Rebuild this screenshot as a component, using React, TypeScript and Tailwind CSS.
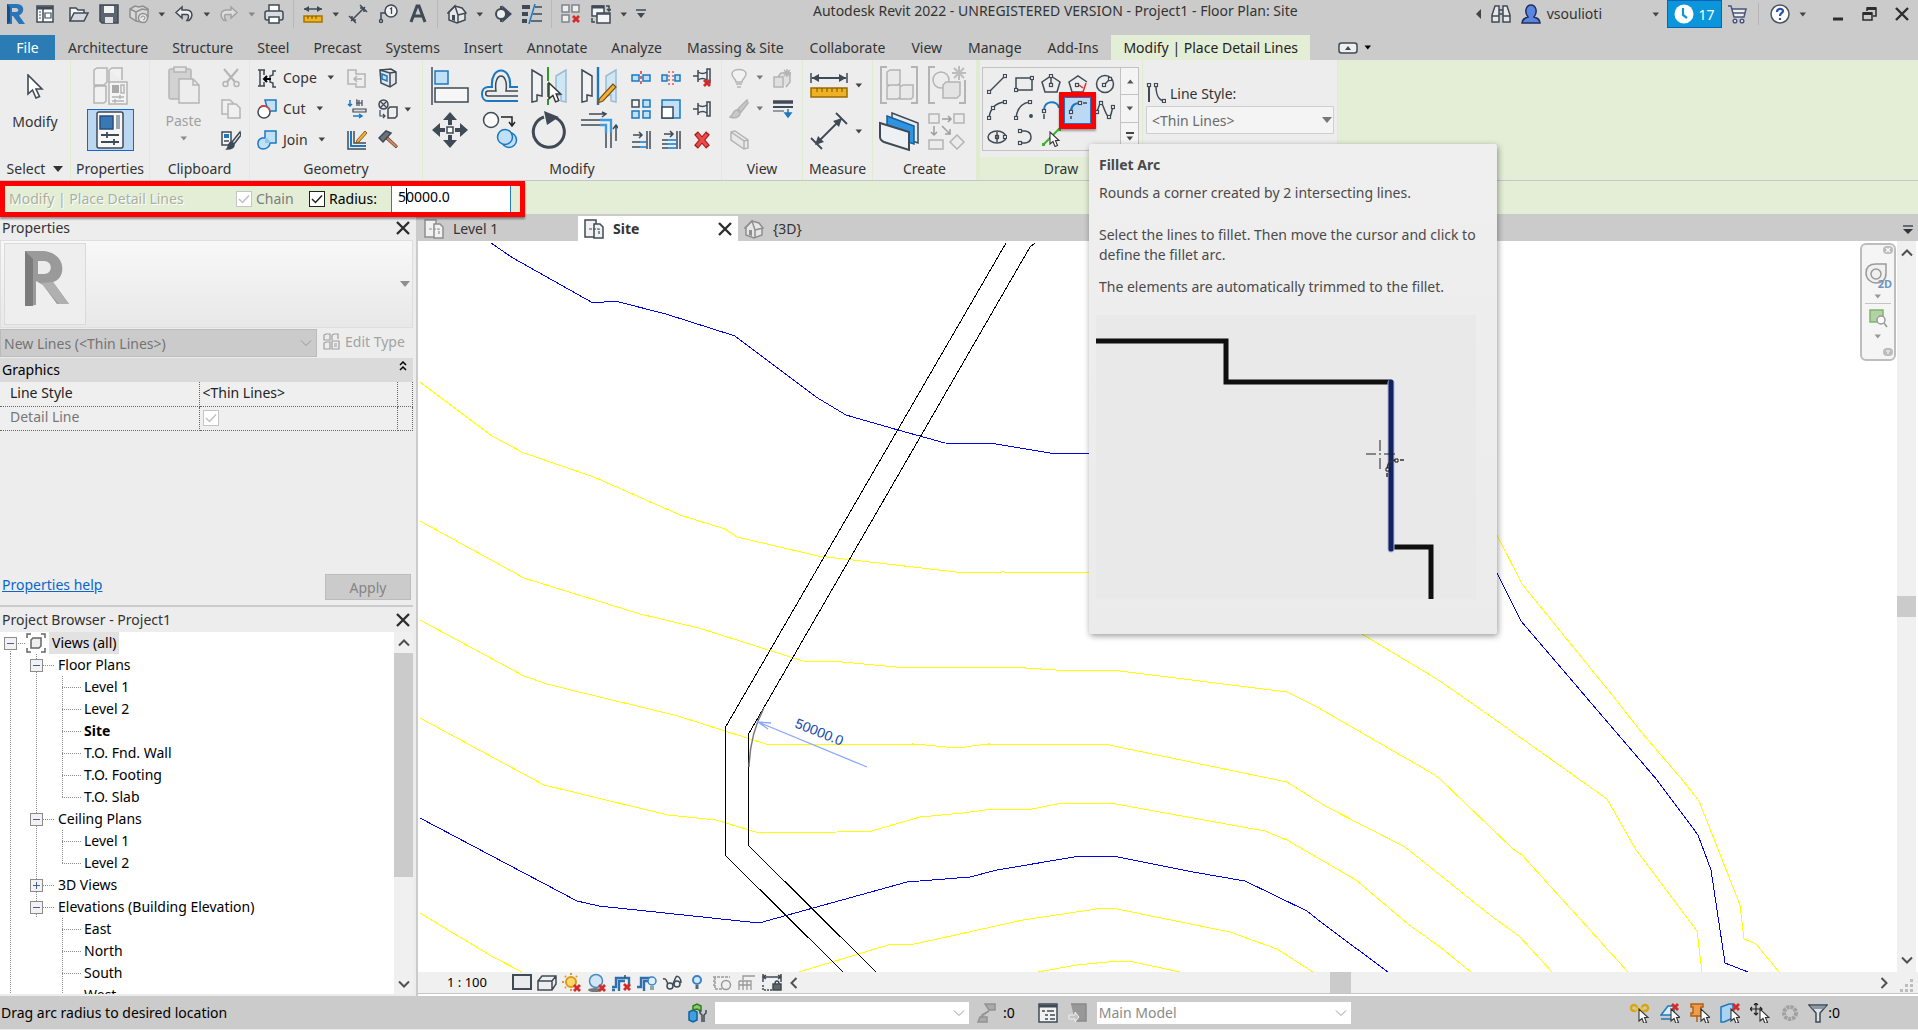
import { useState, type ReactNode } from "react"

const DARK = "#3f4a56"
const BLUE = "#1c78c0"
const PALE = "#bfe0f6"
const GREY = "#b4b4b4"

type DrawingProps = { w?: number; h?: number; children: ReactNode; className?: string }

function Drawing({ w = 20, h = 20, children, className = "" }: DrawingProps) {
  return (
    <svg width={w} height={h} viewBox={`0 0 ${w} ${h}`} fill="none" stroke={DARK} strokeWidth="1.5" className={`shrink-0 ${className}`} aria-hidden="true">
      {children}
    </svg>
  )
}

function Caret({ className = "text-[#444]" }: { className?: string }) {
  return (
    <svg width="8" height="5" viewBox="0 0 8 5" className={`shrink-0 ${className}`} aria-hidden="true">
      <path d="M0.5 0.5h6.5L3.75 4.5z" fill="currentColor" />
    </svg>
  )
}

function Chevron({ d, className = "text-[#505050]" }: { d: string; className?: string }) {
  return (
    <svg width="12" height="12" viewBox="0 0 12 12" fill="none" stroke="currentColor" strokeWidth="2" className={`shrink-0 ${className}`} aria-hidden="true">
      <path d={d} />
    </svg>
  )
}

const UP = "M1 8.5l5-5 5 5"
const DOWN = "M1 3.5l5 5 5-5"
const LEFT = "M8.5 1l-5 5 5 5"
const RIGHT = "M3.5 1l5 5-5 5"

function CloseMark({ size = 14 }: { size?: number }) {
  return (
    <svg width={size} height={size} viewBox="0 0 14 14" stroke="#2d2d2d" strokeWidth="2.4" aria-hidden="true">
      <path d="M1 1l12 12M13 1L1 13" />
    </svg>
  )
}

/* ---------- shared drawings ---------- */

const house = (c: string) => (
  <>
    <path d="M1 9l7-7 7 2 4 5-1 1v6l-8 3-8-3V9z" fill="#e6e6e6" stroke={c} />
    <path d="M1 9l7-7 3 9v8M11 11l8-2" stroke={c} />
    <path d="M5 11h3v6l-3-1z" fill={c} stroke="none" />
  </>
)

const cursor = (
  <path d="M0 0v12l3-2.5 2 5 2.5-1-2-5H9z" fill="#fff" stroke="#333" strokeWidth="1.1" />
)

const redCross = <path d="M0 0l6 6M6 0L0 6" stroke="#d42a2a" strokeWidth="2.8" />

/* ---------- title bar ---------- */

type QuickItem = { name: string; art?: ReactNode; kind?: "caret" | "sep"; off?: boolean }

const quickItems: QuickItem[] = [
  {
    name: "Application menu",
    art: (
      <>
        <path d="M2 0h10c8 0 8 9 2 11.500l6 8.500h-6L8 12H7v8H2z" fill="#2a74b8" stroke="none" />
        <path d="M7 4h4c3 0 3 4 0 4H7z" fill="#cbcbcb" stroke="none" />
        <path d="M2 0l3 3v15l-3 2z" fill="#174f86" stroke="none" />
      </>
    ),
  },
  {
    name: "Home",
    art: (
      <>
        <rect x="2" y="2" width="16" height="16" fill="#fff" />
        <path d="M2 4h16" strokeWidth="3" />
        <path d="M8 5v13" />
        <path d="M4 8h2M4 11h2M4 14h2M10 9h6v5h-6z" strokeWidth="1.2" />
      </>
    ),
  },
  {
    name: "Open",
    art: (
      <>
        <path d="M1 17V4h6l2 2h6v3" fill="#f4f4f4" />
        <path d="M1 17l4-8h14l-4 8z" fill="#d5d9dd" />
      </>
    ),
  },
  {
    name: "Save",
    art: (
      <>
        <path d="M1 1h18v18H3l-2-2z" fill="#5a6570" />
        <path d="M5 2h10v7H5z" fill="#f2f2f2" stroke="none" />
        <path d="M6 13h8v6H6z" fill="#dfe3e6" stroke="none" />
      </>
    ),
  },
  {
    name: "Synchronize",
    off: true,
    art: (
      <>
        <path d="M1 5l5-3 4 1 4-1 5 3v8l-6 5-6-1-6-4z" fill="#d8d8d8" stroke="#8f8f8f" />
        <path d="M1 5l6 3 6-3 6 1M7 8v9" stroke="#8f8f8f" />
        <circle cx="14" cy="14" r="4.500" fill="#e6e6e6" stroke="#8f8f8f" />
        <path d="M12 14a2 2 0 1 1 2 2" stroke="#8f8f8f" strokeWidth="1" />
      </>
    ),
  },
  { name: "Synchronize options", kind: "caret" },
  { name: "Undo", art: <path d="M8 3L2 8.500 8 14v-3.500h5c2 0 2 3 0 6h2c5-5 3-10-2-10.500H8z" fill="#eee" /> },
  { name: "Undo history", kind: "caret" },
  { name: "Redo", off: true, art: <path d="M12 3l6 5.500-6 5.500v-3.500H7c-2 0-2 3 0 6H5c-5-5-3-10 2-10.500h5z" fill="#ddd" stroke="#a2a2a2" /> },
  { name: "Redo history", kind: "caret", off: true },
  {
    name: "Print",
    art: (
      <>
        <path d="M5 7V1h10v6" fill="#fff" />
        <rect x="1" y="7" width="18" height="9" rx="2" fill="#d8dce0" />
        <path d="M5 13h10v6H5z" fill="#fff" />
      </>
    ),
  },
  { name: "s1", kind: "sep" },
  {
    name: "Measure",
    art: (
      <>
        <path d="M1 5h18" />
        <path d="M1 5l5-3v6zM19 5l-5-3v6z" fill={DARK} stroke="none" />
        <rect x="1" y="12" width="18" height="6" fill="#f0b323" stroke="#a87400" />
        <path d="M5 12v3M9 12v3M13 12v3" stroke="#7a5500" strokeWidth="1" />
      </>
    ),
  },
  { name: "Measure options", kind: "caret" },
  { name: "Aligned Dimension", art: <path d="M3 17L17 3M1 12l7 7M12 1l7 7M4 12v4h4M16 8V4h-4" /> },
  {
    name: "Tag by Category",
    art: (
      <>
        <circle cx="13" cy="7" r="6" fill="#f3f3f3" />
        <path d="M12 5l1.500-1v6" strokeWidth="1.3" />
        <path d="M7 9H3v7" />
        <circle cx="3" cy="17" r="1.500" fill="#fff" />
      </>
    ),
  },
  { name: "Text", art: <path d="M3 18L9 2h2l6 16M6 12h8" strokeWidth="3" /> },
  { name: "s2", kind: "sep" },
  { name: "Default 3D View", art: house(DARK) },
  { name: "3D View options", kind: "caret" },
  {
    name: "Section",
    art: (
      <>
        <path d="M9 2v16" strokeWidth="2" />
        <path d="M11 3l8 7-8 7z" fill={DARK} />
        <circle cx="9" cy="10" r="5" fill="#eee" strokeWidth="2" />
      </>
    ),
  },
  {
    name: "Thin Lines",
    art: (
      <>
        <path d="M0 3h8M0 10h6M0 17h5" strokeWidth="4" />
        <path d="M13 0L7 20" stroke={BLUE} />
        <path d="M13 3h7M11 10h9M9 17h11" strokeWidth="1.3" />
      </>
    ),
  },
  { name: "s3", kind: "sep" },
  {
    name: "Close Inactive Views",
    art: (
      <>
        <path d="M1 1h7v7H1zM11 1h7v7h-7zM1 11h7v7H1z" fill="#eee" stroke="#7e858c" />
        <g transform="translate(12 12)">{redCross}</g>
      </>
    ),
  },
  {
    name: "Switch Windows",
    art: (
      <>
        <rect x="1" y="2" width="12" height="10" fill="#f4f4f4" />
        <path d="M1 3h12" strokeWidth="3" />
        <rect x="6" y="9" width="13" height="10" fill="#f4f4f4" />
        <path d="M6 10h13M15 2h3v5M16 5l2 2 2-2M1 14v4h3" />
      </>
    ),
  },
  { name: "Switch Windows list", kind: "caret" },
]

function QuickAccess() {
  return (
    <div className="flex h-[28px] items-center">
      {quickItems.map((item) => {
        if (item.kind === "sep") {
          return (
            <span key={item.name} className="flex w-[9px] justify-center">
              <span className="h-7 w-px bg-[#b9b9b9]" />
            </span>
          )
        }
        if (item.kind === "caret") {
          return (
            <button key={item.name} aria-label={item.name} className="flex w-[15px] justify-center">
              <Caret className={item.off ? "text-[#888]" : "text-[#444]"} />
            </button>
          )
        }
        return (
          <button key={item.name} aria-label={item.name} className={`flex w-[30px] justify-center ${item.name === "Home" ? "mr-1" : ""}`}>
            <Drawing>{item.art}</Drawing>
          </button>
        )
      })}
      <button aria-label="Customize Quick Access Toolbar" className="flex w-5 justify-center">
        <Drawing w={12} h={12}>
          <path d="M1 2h10" />
          <path d="M2 5h8l-4 5z" fill={DARK} stroke="none" />
        </Drawing>
      </button>
    </div>
  )
}

function TitleBar() {
  return (
    <header className="flex h-[35px] shrink-0 items-start justify-between bg-[#cbcbcb]">
      <QuickAccess />
      <h1 className="flex-1 pl-[162px] text-[14px] leading-[22px] whitespace-nowrap">
        Autodesk Revit 2022 - UNREGISTERED VERSION - Project1 - Floor Plan: Site
      </h1>
      <div className="flex h-[28px] items-center text-[14px]">
        <button aria-label="Collapse search" className="mr-2">
          <Drawing w={8} h={10}><path d="M6 0v10L1 5z" fill="#444" stroke="none" /></Drawing>
        </button>
        <button aria-label="Search" className="mr-2.5">
          <Drawing>
            <path d="M1 18v-7l3-9h4v16zM19 18v-7l-3-9h-4v16z" fill="#e8e8e8" />
            <path d="M8 6h4M8 10h4M1 12h7M12 12h7" />
          </Drawing>
        </button>
        <button className="flex items-center gap-1.5 leading-[28px]">
          <Drawing>
            <path d="M1 19c0-4 3-5 6-6-4-5-2-12 3-12s7 7 3 12c3 1 6 2 6 6z" fill="#5b86e0" stroke="#1f2f5c" />
          </Drawing>
          vsoulioti
        </button>
        <button aria-label="Account menu" className="mr-[7px] ml-[50px]"><Caret /></button>
        <button className="flex h-[28px] w-[55px] items-center justify-center gap-1 border border-[#0a62b8] bg-[#0b96dc] text-white">
          <Drawing>
            <circle cx="10" cy="10" r="9.500" fill="#fff" stroke="none" />
            <path d="M9 4v7l4 3" stroke="#0b96dc" strokeWidth="2.200" />
          </Drawing>
          17
        </button>
        <button aria-label="App Store" className="ml-[5px]">
          <Drawing>
            <path d="M1 2h3l3 11h10l2-8H5M6 9h12" fill="#eee" stroke="#4a5578" />
            <circle cx="8" cy="17" r="1.800" fill="#fff" stroke="#4a5578" />
            <circle cx="15" cy="17" r="1.800" fill="#fff" stroke="#4a5578" />
          </Drawing>
        </button>
        <span className="mx-[11px] h-[22px] w-px bg-[#b5b5b5]" />
        <button aria-label="Help">
          <Drawing>
            <circle cx="10" cy="10" r="9" fill="#fff" stroke="#4a5560" />
            <path d="M7 8c0-4 6-4 6-1 0 2-3 2-3 5M10 14v2" stroke="#2951a8" strokeWidth="2.200" />
          </Drawing>
        </button>
        <button aria-label="Help menu" className="ml-[9px]"><Caret /></button>
        <button aria-label="Minimize" className="ml-[26px]">
          <Drawing w={10} h={14}><path d="M0 12h10" stroke="#2d2d2d" strokeWidth="3" /></Drawing>
        </button>
        <button aria-label="Restore" className="ml-[19px]">
          <Drawing w={15} h={14}>
            <path d="M5 4V1h9v8h-3" stroke="#2d2d2d" />
            <path d="M5 1.500h9M1 6.500h9" stroke="#2d2d2d" strokeWidth="3" />
            <path d="M1 6h9v7H1z" stroke="#2d2d2d" />
          </Drawing>
        </button>
        <button aria-label="Close" className="mr-[9px] ml-[18px]"><CloseMark /></button>
      </div>
    </header>
  )
}

/* ---------- ribbon tabs ---------- */

const tabs = ["Architecture", "Structure", "Steel", "Precast", "Systems", "Insert", "Annotate", "Analyze"]
const moreTabs = ["Massing & Site", "Collaborate", "View", "Manage", "Add-Ins"]

function RibbonTabs() {
  return (
    <nav className="flex h-[25px] shrink-0 items-stretch bg-[#cbcbcb] text-[14px] leading-[25px] whitespace-nowrap">
      <button className="mr-px w-[55px] bg-[#2b7bb4] text-white">File</button>
      {tabs.map((tab) => (
        <button key={tab} className="px-3">{tab}</button>
      ))}
      {moreTabs.map((tab) => (
        <button key={tab} className="px-[13px]">{tab}</button>
      ))}
      <button className="bg-[#e4eed6] px-3 text-[#222]">Modify | Place Detail Lines</button>
      <button aria-label="Minimize ribbon" className="ml-7 flex items-center gap-1.5">
        <Drawing w={20} h={12}>
          <rect x="1" y="1" width="18" height="10" rx="2.500" fill="#eee" />
          <path d="M7 8h6l-3-4z" fill={DARK} stroke="none" />
        </Drawing>
        <Caret className="text-black" />
      </button>
    </nav>
  )
}

/* ---------- ribbon panels ---------- */

function Panel({ title, className = "", labelClass = "", children }: { title: ReactNode; className?: string; labelClass?: string; children: ReactNode }) {
  return (
    <section className={`flex shrink-0 flex-col border-r border-[#e0ecd0] bg-[#ededed] ${className}`}>
      <div className="flex h-[97px] pt-[2px]">{children}</div>
      <div className={`flex h-[23px] items-center justify-center text-[14px] leading-[23px] ${labelClass}`}>{title}</div>
    </section>
  )
}

function Tool({ name, w = 20, h = 20, children, className = "" }: { name: string; w?: number; h?: number; children: ReactNode; className?: string }) {
  return (
    <button aria-label={name} title={name} className={`flex items-center justify-center ${className}`}>
      <Drawing w={w} h={h}>{children}</Drawing>
    </button>
  )
}

function SelectPanel() {
  return (
    <Panel
      className="w-[71px]"
      title={
        <span className="flex items-center gap-2">
          Select
          <Drawing w={10} h={6}><path d="M0 0h10L5 6z" fill="#333" stroke="none" /></Drawing>
        </span>
      }
    >
      <button className="flex w-full flex-col items-center pt-3">
        <Drawing w={18} h={26}>
          <path d="M2 1v19l4.500-4 3.500 8 3.500-1.500L10 15h6z" fill="#fff" strokeWidth="1.600" />
        </Drawing>
        <span className="mt-2.5 text-[14px] leading-[24px]">Modify</span>
      </button>
    </Panel>
  )
}

function PropertiesPanel() {
  return (
    <Panel className="w-[79px]" title="Properties">
      <div className="flex w-full flex-col items-center pt-[5px]">
        <Tool name="Type Properties" w={38} h={38} className="mb-1">
          <path d="M3 3l3-2h10v14l-3 3H3zM18 3l3-2h10v12M18 3v12M3 20l3-1h9v15l-2 2H3z" fill="#f1f1f1" stroke={GREY} />
          <path d="M18 15h18v22H18z" fill="#f4f4f4" stroke={GREY} />
          <path d="M21 18h7v8h-7z" fill="#a9a9a9" stroke="none" />
          <path d="M30 18h3v8h-3zM21 30h12M21 34h12M29 28v4M24 32v4" stroke={GREY} />
        </Tool>
        <button aria-label="Properties" className="flex h-[42px] w-[47px] items-center justify-center border border-[#1368ce] bg-[#bcd7f2]">
          <Drawing w={28} h={38}>
            <rect x="1" y="1" width="26" height="36" rx="2" fill="#f7f7f7" />
            <path d="M4 5h13v13H4z" fill="#3a78b5" stroke="#23527f" />
            <path d="M20 4h4v14h-4z" fill="#9fa6ad" stroke="none" />
            <path d="M5 24h18M5 31h18M11 21v6M18 28v6" strokeWidth="1.800" />
          </Drawing>
        </button>
      </div>
    </Panel>
  )
}

function ClipboardPanel() {
  return (
    <Panel className="w-[100px]" title="Clipboard">
      <button className="flex w-[67px] flex-col items-center pt-1 text-[#a0a0a0]">
        <Drawing w={34} h={38}>
          <rect x="2" y="3" width="22" height="30" rx="2" fill="#d2d2d2" stroke="#b5b5b5" />
          <path d="M7 1h12v5H7z" fill="#e6e6e6" stroke="#b5b5b5" />
          <path d="M12 13h14l6 6v18H12z" fill="#ededed" stroke="#b5b5b5" />
          <path d="M26 13v6h6" stroke="#b5b5b5" />
        </Drawing>
        <span className="mt-1.5 text-[14px] leading-[22px]">Paste</span>
        <Caret className="mt-1 text-[#8a8a8a]" />
      </button>
      <div className="grid w-7 grid-rows-3 pb-0.5">
        <Tool name="Cut to Clipboard">
          <path d="M3 1l11 13M17 1L6 14" stroke={GREY} strokeWidth="2" />
          <circle cx="4.500" cy="16" r="2.500" stroke={GREY} />
          <circle cx="15.500" cy="16" r="2.500" stroke={GREY} />
        </Tool>
        <Tool name="Copy to Clipboard">
          <path d="M1 1h8l3 3v11H1z" fill="#f0f0f0" stroke={GREY} />
          <path d="M7 5h8l4 4v10H7z" fill="#f0f0f0" stroke={GREY} />
        </Tool>
        <Tool name="Match Type Properties">
          <path d="M1 2h9v13H1z" fill="#f6f6f6" />
          <path d="M3 4h5v4H3z" fill={BLUE} stroke="none" />
          <path d="M3 11h5" />
          <path d="M19 2l-8 10 2 2 7-9z" fill="#efefef" />
          <path d="M10 12l3 3c0 3-4 4-7 4 2-2 1-6 4-7z" fill={DARK} />
        </Tool>
      </div>
    </Panel>
  )
}

function LabelTool({ label, children }: { label: string; children: ReactNode }) {
  return (
    <button className="flex items-center text-[14px]">
      <Drawing>{children}</Drawing>
      <span className="mr-2.5 ml-[6px]">{label}</span>
      <Caret />
    </button>
  )
}

function GeometryPanel() {
  return (
    <Panel className="w-[173px]" title="Geometry">
      <div className="grid w-[92px] grid-rows-3 pb-0.5 pl-[7px]">
        <LabelTool label="Cope">
          <path d="M1 2h7M1 18h7M3 2v16M7 2v5M7 18v-4M19 3h-3v4l-3 1v6l3 1v4h3" />
          <path d="M14 11H7M10 8l-3 3 3 3" stroke="#000" strokeWidth="2" />
        </LabelTool>
        <LabelTool label="Cut">
          <path d="M8 1h11v11h-8z" fill={PALE} stroke={BLUE} />
          <circle cx="7" cy="13" r="6" fill="#fff" />
          <path d="M3 8c4-3 9 0 10 4" stroke="#e04040" />
        </LabelTool>
        <LabelTool label="Join">
          <path d="M8 1h11v12h-6c0 4-4 6-7 6-6 0-7-9-1-11h3z" fill={PALE} stroke={BLUE} />
          <path d="M8 8c3 0 5 2 5 5H8z" fill="#8fc6ec" stroke="none" />
        </LabelTool>
      </div>
      <div className="grid w-[30px] grid-rows-3 pb-0.5">
        <Tool name="Wall Joins">
          <path d="M1 2h8v4h9v13h-9v-3H1z" fill="#eee" stroke={GREY} />
          <path d="M15 11H7M10 8l-3 3 3 3" stroke={GREY} />
        </Tool>
        <Tool name="Beam Joins">
          <path d="M3 1v6M1 5l2 2 2-2" stroke={BLUE} />
          <path d="M9 1h1v6M12 1v6M15 1v6M9 4h6M6 10h13v3H6z" fill="#ddd" strokeWidth="1.200" />
          <path d="M6 17h9M12 15l3 2-3 2" stroke={BLUE} />
        </Tool>
        <Tool name="Split Face">
          <path d="M1 1v18h18M7 1v12h12" />
          <path d="M4 1v15h15" stroke={BLUE} strokeWidth="2" />
          <path d="M18 1l-8 9-1 3 3-1 8-9z" fill="#f0b040" stroke="#8c5a12" strokeWidth="1" />
        </Tool>
      </div>
      <div className="grid w-[32px] grid-rows-3 pb-0.5">
        <Tool name="Paint">
          <path d="M2 2l11-1 5 3v11l-6 4-9-4z" fill="#e4e8ec" />
          <path d="M2 2l10 3v14M12 5l6-1" />
          <path d="M4 6l5 2v5l-5-2z" fill={PALE} stroke={BLUE} />
        </Tool>
        <Tool name="Demolish">
          <circle cx="5.500" cy="5.500" r="4.500" fill="#e2e2e2" />
          <path d="M2 2l7 7M9 2L2 9M2 11v6h5M5 15l2 2-2 2" strokeWidth="1.200" />
          <path d="M10 10l2-2h7v9l-2 2h-7z" fill="#eee" />
        </Tool>
        <Tool name="Hammer">
          <path d="M8 9l10 9 1.500-2L10 7z" fill="#c98a68" stroke="#7a4a30" strokeWidth="1" />
          <path d="M1 8l7-7 5 2-8 9z" fill="#6b747d" />
        </Tool>
      </div>
      <button aria-label="Demolish options" className="flex w-3 items-center"><Caret /></button>
    </Panel>
  )
}

function ModifyPanel() {
  return (
    <Panel className="w-[299px]" title="Modify">
      <div className="grid w-[201px] grid-cols-4 grid-rows-[48px_40px] pl-0.5">
        <Tool name="Align" w={38} h={38}>
          <path d="M1 0v38" />
          <path d="M4 4h13v13H4z" fill={PALE} stroke={BLUE} />
          <path d="M4 21h33v14H4z" fill="#f6f6f6" />
        </Tool>
        <Tool name="Offset" w={38} h={36}>
          <path d="M37 33H7c-8 0-8-14 0-14h4c-2-22 20-22 18 0h8" stroke={BLUE} strokeWidth="2" />
          <path d="M37 28H7c-3 0-3-5 0-5h8c-3-20 13-20 10 0h12" />
        </Tool>
        <Tool name="Mirror - Pick Axis" w={38} h={38}>
          <path d="M2 3l10 6v20l-5-1v6l-5 1z" fill="#f2f2f2" />
          <path d="M36 3l-10 6v20l5-1v6l5 1z" fill="#cfe6f5" stroke="#9bbdd4" />
          <path d="M18 0v38" stroke="#2c9a2c" strokeWidth="2" strokeDasharray="14 2" />
          <g transform="translate(19 16) scale(1.3)">{cursor}</g>
        </Tool>
        <Tool name="Mirror - Draw Axis" w={38} h={38}>
          <path d="M2 3l10 6v20l-5-1v6l-5 1z" fill="#f2f2f2" />
          <path d="M36 3l-10 6v20l5-1v6l5 1z" fill="#cfe6f5" stroke="#9bbdd4" />
          <path d="M18 0v38" stroke={BLUE} strokeWidth="2.400" />
          <path d="M33 17L20 31l-2 5 5-2 13-14z" fill="#f2b23c" stroke="#7c5313" strokeWidth="1.200" />
        </Tool>
        <Tool name="Move" w={38} h={38}>
          <path d="M19 1l7 8h-5v5h-4V9h-5zM19 37l7-8h-5v-5h-4v5h-5zM1 19l8-7v5h5v4H9v5zM37 19l-8-7v5h-5v4h5v5z" fill={DARK} stroke="none" />
          <path d="M16 16h6v6h-6z" fill="#fff" />
        </Tool>
        <Tool name="Copy" w={38} h={38}>
          <circle cx="10" cy="9" r="7.500" fill="#fafafa" />
          <path d="M20 6h11v8M28 11l3 4 3-4" stroke="#222" />
          <circle cx="28" cy="29" r="7.500" fill={PALE} stroke={BLUE} />
          <circle cx="24" cy="26" r="7.500" fill={PALE} stroke={BLUE} />
        </Tool>
        <Tool name="Rotate" w={38} h={38}>
          <path d="M14 6a15.500 15.500 0 1 0 12 1" strokeWidth="3" />
          <path d="M14 0l15 6-12 8z" fill={DARK} stroke="none" />
        </Tool>
        <Tool name="Trim/Extend to Corner" w={38} h={38}>
          <path d="M1 9h19M1 14h19M26 22v15M31 22v15M9 3h16M22 1l4 2-4 3M36 30V15M33 18l3-4 3 4" />
          <path d="M20 9h11v13M20 14h6v8" stroke="#3f9be0" strokeWidth="2.400" />
        </Tool>
      </div>
      <div className="grid w-[93px] grid-cols-3 grid-rows-3 pb-0.5 pl-[2px]">
        <Tool name="Split Element">
          <path d="M1 7h7v6H1zM12 7h7v6h-7z" fill={PALE} stroke={BLUE} />
          <path d="M10 3v14" stroke="#d33" strokeDasharray="3 2" />
        </Tool>
        <Tool name="Split with Gap">
          <path d="M1 7h5v6H1zM14 7h5v6h-5z" fill={PALE} stroke={BLUE} />
          <path d="M8 3v14M12 3v14" stroke="#d33" strokeWidth="1.200" strokeDasharray="2 2" />
        </Tool>
        <Tool name="Unpin">
          <path d="M1 8h5M6 2v12M6 4c3 2 6 2 9 0M6 12c3-2 6-2 9 0M15 1v14h3V1z" fill="#eee" />
          <g transform="translate(12 12)">{redCross}</g>
        </Tool>
        <Tool name="Array">
          <path d="M1 1h7v7H1z" fill="#f4f4f4" />
          <path d="M12 1h7v7h-7zM1 12h7v7H1zM12 12h7v7h-7z" fill={PALE} stroke={BLUE} />
        </Tool>
        <Tool name="Scale">
          <path d="M1 1h18v18H1z" fill={PALE} stroke={BLUE} />
          <path d="M1 8h11v11H1z" fill="#fff" />
        </Tool>
        <Tool name="Pin">
          <path d="M1 10h5M6 4v12M6 6c3 2 6 2 9 0M6 14c3-2 6-2 9 0M15 3v14h3V3z" fill="#eee" />
        </Tool>
        <Tool name="Trim/Extend Single">
          <path d="M16 1v18M19 1v18M2 5h9M8 2l3 3-3 3M1 12h8M1 17h8" />
          <path d="M9 12h6M9 17h6" stroke="#3f9be0" strokeWidth="2" />
        </Tool>
        <Tool name="Trim/Extend Multiple">
          <path d="M16 1v18M19 1v18M3 4h9M9 1l3 3-3 3M1 10h6M1 14h6M1 18h6" />
          <path d="M7 10h8M7 14h8M7 18h8" stroke="#3f9be0" strokeWidth="2" />
        </Tool>
        <Tool name="Delete">
          <path d="M4 3l12 14M16 3L4 17" stroke="#a81c1c" strokeWidth="5" />
          <path d="M5 4l10 12M15 4L5 16" stroke="#ee4b48" strokeWidth="3" />
        </Tool>
      </div>
    </Panel>
  )
}

function ViewPanel() {
  return (
    <Panel className="w-[81px]" title="View">
      <div className="grid w-full grid-cols-[34px_10px_34px] grid-rows-3 pb-0.5">
        <Tool name="Hide in View">
          <path d="M7 14c0-3-4-4-4-8C3 0 17 0 17 6c0 4-4 5-4 8zM7 16h6M8 19h4" fill="#f2f2f2" stroke={GREY} />
        </Tool>
        <button aria-label="Hide options" className="flex items-center"><Caret className="text-[#777]" /></button>
        <Tool name="Displace Elements">
          <path d="M1 9h9v10H1zM5 9l3-4h9v9l-4 5" fill="#e0e0e0" stroke={GREY} />
          <path d="M14 1v8M10 5h8M11 2l6 6M17 2l-6 6" stroke={GREY} />
        </Tool>
        <Tool name="Override Graphics">
          <path d="M18 1l-9 9 3 3 7-9zM8 11c-4 0-4 6-7 7 5 2 10 0 10-4z" fill="#c9c9c9" stroke={GREY} />
        </Tool>
        <button aria-label="Override options" className="flex items-center"><Caret className="text-[#777]" /></button>
        <Tool name="Linework">
          <path d="M0 3h20" strokeWidth="3.500" />
          <path d="M0 8h20" strokeWidth="2" />
          <path d="M0 12h11" strokeWidth="1" />
          <path d="M15 10v5M12 14h6l-3 4z" fill={BLUE} stroke={BLUE} />
        </Tool>
        <Tool name="Selection Box">
          <path d="M2 2l4-1 13 9v8l-4 1-13-9zM2 2l13 9v8M15 11l4-1" fill="#e8e8e8" stroke={GREY} />
        </Tool>
      </div>
    </Panel>
  )
}

function MeasurePanel() {
  return (
    <Panel className="w-[70px]" title="Measure">
      <div className="grid w-full grid-cols-[52px_14px] grid-rows-[46px_46px]">
        <Tool name="Measure Between" w={38} h={26}>
          <path d="M2 6h34" strokeWidth="2" />
          <path d="M1 1v10M37 1v10" />
          <path d="M2 6l7-4v8zM36 6l-7-4v8z" fill={DARK} stroke="none" />
          <rect x="1" y="16" width="36" height="9" fill="#eeb224" stroke="#9a6b00" />
          <path d="M7 16v4M12 16v4M17 16v4M22 16v4M27 16v4M32 16v4" stroke="#7a5500" strokeWidth="1" />
        </Tool>
        <button aria-label="Measure options" className="flex items-center"><Caret /></button>
        <Tool name="Aligned Dimension" w={38} h={38}>
          <path d="M6 32L31 7M1 26l11 11M26 1l11 11" strokeWidth="1.800" />
          <path d="M5 33l3-9 6 6zM32 6l-3 9-6-6z" fill={DARK} stroke="none" />
        </Tool>
        <button aria-label="Dimension options" className="flex items-center"><Caret /></button>
      </div>
    </Panel>
  )
}

function CreatePanel() {
  return (
    <Panel className="w-[107px] border-r-4" title="Create">
      <div className="grid w-[98px] grid-cols-2 grid-rows-[46px_46px] pl-0.5">
        <Tool name="Create Assembly" w={38} h={38}>
          <path d="M7 1H1v36h6M31 1h6v36h-6" stroke={GREY} strokeWidth="2" />
          <path d="M7 6l3-2h10v13l-2 2H7zM7 21l3-2h10v12l-2 2H7zM20 21l3-2h10v12l-2 2H20z" fill="#e9e9e9" stroke={GREY} />
        </Tool>
        <Tool name="Create Group" w={38} h={38}>
          <path d="M7 1H1v36h6M31 37h6V14" stroke={GREY} strokeWidth="2" />
          <circle cx="13" cy="14" r="8" fill="#ececec" stroke={GREY} />
          <path d="M15 19l3-3h14v13l-3 3H15z" fill="#e3e3e3" stroke={GREY} />
          <path d="M31 0v14M24 7h14M26 2l10 10M36 2L26 12" stroke="#bdbdbd" strokeWidth="2" />
        </Tool>
        <Tool name="Create Similar" w={42} h={42}>
          <path d="M14 3l26 10v20L14 24z" fill="#e6ebef" />
          <path d="M9 6l27 10v18L9 25z" fill="#2f93df" stroke="#15609f" />
          <path d="M2 13l29 9v18L6 32c-2-1-4-3-4-5z" fill="#eef1f4" strokeWidth="2" />
        </Tool>
        <Tool name="Create Part" w={38} h={38}>
          <path d="M1 2h10v9H1zM26 2h10v9H26zM1 28h14v9H1zM29 23l7 7-7 7-7-7z" fill="#ececec" stroke={GREY} />
          <path d="M14 7h9M20 4l3 3-3 3M6 14v9M3 20l3 3 3-3M14 14l8 8M22 17v5h-5" stroke="#9d9d9d" />
        </Tool>
      </div>
    </Panel>
  )
}

/* square grip used at the ends of the sketch tools */
const grip = (x: number, y: number) => <rect x={x - 1.5} y={y - 1.5} width="3" height="3" fill="#fff" strokeWidth="1.2" />

const drawTools: { name: string; art: ReactNode }[] = [
  { name: "Line", art: <><path d="M2 18L18 2" />{grip(2, 18)}{grip(18, 2)}</> },
  { name: "Rectangle", art: <><path d="M2 4h16v12H2z" />{grip(2, 16)}{grip(18, 4)}</> },
  { name: "Inscribed Polygon", art: <><path d="M10 2l9 6-3 10H4L1 8z" />{grip(10, 2)}{grip(10, 11)}<path d="M10 4v5" /></> },
  { name: "Circumscribed Polygon", art: <><path d="M16 18H4L1 8l9-6 9 6" />{grip(9, 11)}<path d="M11 11l4 3M18 9l-3 9" stroke="#d33" /></> },
  { name: "Circle", art: <><circle cx="10" cy="10" r="8.500" />{grip(9, 11)}{grip(15, 5)}<path d="M10 10l4-4" /></> },
  { name: "Start-End-Radius Arc", art: <><path d="M2 18C3 9 8 3 18 2" />{grip(2, 18)}{grip(6, 8)}{grip(18, 2)}</> },
  { name: "Center-ends Arc", art: <><path d="M2 18C3 9 8 3 16 2" />{grip(2, 18)}{grip(16, 2)}<circle cx="17" cy="16" r="1.200" fill={DARK} /></> },
  { name: "Tangent End Arc", art: <><path d="M3 10C3 0 17 0 18 8" stroke={BLUE} strokeWidth="2" /><path d="M3 14v5" />{grip(3, 11)}</> },
  { name: "Fillet Arc", art: <><path d="M3 12C3 6 6 3 12 3" stroke={BLUE} strokeWidth="2.200" />{grip(3, 12)}{grip(12, 3)}<path d="M3 16v3M15 3h4" /></> },
  { name: "Spline", art: <><path d="M1 12C3 12 4 3 6 3s5 14 8 14 2-9 5-10" />{grip(2, 12)}{grip(6, 3)}{grip(14, 17)}{grip(18, 7)}</> },
  { name: "Ellipse", art: <><ellipse cx="10" cy="10" rx="9" ry="6" />{grip(10, 10)}{grip(18, 10)}<path d="M10 5v10" /></> },
  { name: "Partial Ellipse", art: <><path d="M6 4h5c8 1 8 11 0 12H6" />{grip(6, 4)}{grip(6, 16)}</> },
  { name: "Pick Lines", art: <><path d="M2 18L18 2" stroke="#3cb32c" strokeWidth="2" /><path d="M1 16h3v3H1zM17 1h3v3h-3z" fill="#3cb32c" stroke="none" /><g transform="translate(9 5)">{cursor}</g></> },
]

function DrawPanel() {
  return (
    <Panel className="w-[163px]" title="Draw" labelClass="bg-[#e4eed6]">
      <div className="mt-[5px] ml-0.5 flex h-[84px] w-[157px] border border-[#c2c2c2]">
        <div className="grid flex-1 grid-cols-[repeat(5,27px)] grid-rows-3 pt-[3px]">
          {drawTools.map((tool) =>
            tool.name === "Fillet Arc" ? (
              <button key={tool.name} aria-label={tool.name} aria-pressed="true" className="relative flex items-center justify-center border border-[#2a6fc0] bg-[#bdd8f3]">
                <Drawing>{tool.art}</Drawing>
                <span className="absolute -inset-[6px] border-[5px] border-[#fd0000] shadow-[0_2px_2px_rgba(0,0,0,0.35)]" />
              </button>
            ) : (
              <button key={tool.name} aria-label={tool.name} className="flex items-center justify-center">
                <Drawing>{tool.art}</Drawing>
              </button>
            ),
          )}
        </div>
        <div className="grid w-[18px] grid-rows-3 divide-y divide-[#c2c2c2] border-l border-[#c2c2c2] bg-[#f4f4f4]">
          <button aria-label="Scroll up" className="flex items-center justify-center"><Caret className="rotate-180 text-[#555]" /></button>
          <button aria-label="Scroll down" className="flex items-center justify-center"><Caret className="text-[#555]" /></button>
          <button aria-label="More tools" className="flex flex-col items-center justify-center gap-0.5">
            <span className="h-0.5 w-2 bg-[#444]" />
            <Caret />
          </button>
        </div>
      </div>
    </Panel>
  )
}

function LineStylePanel() {
  return (
    <Panel className="w-[195px]" title="">
      <div className="flex w-full flex-col pt-[18px] pr-[3px] pl-[3px]">
        <label htmlFor="line-style" className="flex h-[26px] items-center gap-1 text-[14px]">
          <Drawing>
            <path d="M3 2v17" strokeWidth="2" />
            <path d="M10 2c0 10 2 15 8 16" />
            {grip(3, 2)}{grip(10, 2)}{grip(18, 18)}
          </Drawing>
          Line Style:
        </label>
        <div className="flex h-[28px] items-center border border-[#cfcfcf] bg-[#f4f4f4] pr-[1px]">
          <select id="line-style" className="h-full flex-1 appearance-none bg-transparent pl-[5px] text-[14px] text-[#6b6b6b]">
            <option>&lt;Thin Lines&gt;</option>
          </select>
          <Drawing w={10} h={6}><path d="M0 0h10L5 6z" fill="#777" stroke="none" /></Drawing>
        </div>
      </div>
    </Panel>
  )
}

function Ribbon() {
  return (
    <div className="flex h-[121px] shrink-0 border-b border-[#c6c6c6] bg-[#e4eed6]">
      <SelectPanel />
      <PropertiesPanel />
      <ClipboardPanel />
      <GeometryPanel />
      <ModifyPanel />
      <ViewPanel />
      <MeasurePanel />
      <CreatePanel />
      <DrawPanel />
      <LineStylePanel />
    </div>
  )
}

/* ---------- options bar ---------- */

function Check({ id, disabled = false, label }: { id: string; disabled?: boolean; label?: string }) {
  return (
    <span className="grid">
      <input
        id={id}
        type="checkbox"
        defaultChecked
        disabled={disabled}
        aria-label={label}
        className="peer col-start-1 row-start-1 size-4 appearance-none border border-[#222] bg-white disabled:border-[#c4c4c4]"
      />
      <svg viewBox="0 0 16 16" className="pointer-events-none col-start-1 row-start-1 size-4 fill-none stroke-[#222] stroke-[1.5] peer-disabled:stroke-[#c0c0c0]" aria-hidden="true">
        <path d="M3 8l3.500 3.500L13 4.500" />
      </svg>
    </span>
  )
}

function OptionsBar() {
  return (
    <div className="relative flex h-[33px] shrink-0 items-center bg-[#e4eed6] text-[14px]">
      <span className="w-[236px] pt-0.5 pl-[9px] whitespace-nowrap text-[#a9b0a1] [text-shadow:1px_1px_0_#fff]">Modify | Place Detail Lines</span>
      <label htmlFor="chain" className="flex w-[73px] items-center gap-1 pt-0.5 text-[#7c7c7c]">
        <Check id="chain" disabled />
        Chain
      </label>
      <label htmlFor="use-radius" className="flex w-[82px] items-center gap-1 pt-0.5 text-black">
        <Check id="use-radius" />
        Radius:
      </label>
      <input
        aria-label="Radius value"
        defaultValue="50000.0"
        className="mt-[3px] h-[28px] w-[120px] border border-[#2a7ac4] bg-white px-[6px] pb-1.5 text-black outline-none"
      />
      <span className="absolute top-[7px] left-[406px] h-[16px] w-px bg-black" />
      <span className="pointer-events-none absolute top-0 left-0 z-10 h-[36px] w-[525px] border-[5px] border-[#fd0000] shadow-[0_2px_2px_rgba(0,0,0,0.4)]" />
    </div>
  )
}

/* ---------- left palettes ---------- */

function PaletteTitle({ title }: { title: string }) {
  return (
    <div className="flex h-[25px] shrink-0 items-center justify-between pr-[3px] pl-0.5 text-[14px]">
      <h2>{title}</h2>
      <button aria-label={`Close ${title}`}><CloseMark /></button>
    </div>
  )
}

function PropertiesPalette() {
  return (
    <section className="flex h-[391px] shrink-0 flex-col pt-px">
      <PaletteTitle title="Properties" />
      <button aria-label="Type selector" className="flex h-[88px] shrink-0 items-center justify-between border border-[#dedede] bg-linear-to-b from-[#f8f8f8] to-[#e8e8e8] pr-[2px] pl-[3px]">
        <span className="flex size-[82px] items-center justify-center border border-[#dadada] bg-[#eeeeee]">
          <Drawing w={60} h={62} className="mb-3">
            <path d="M10 4h16c26 0 26 28 12 31l16 22H42L28 38l-7-4v24l-11 1z" fill="#9a9a9a" stroke="none" />
            <path d="M10 4l8 8v47h-8z" fill="#7c7c7c" stroke="none" />
            <path d="M23 14h6c9 0 9 13 0 13h-6z" fill="#ececec" stroke="none" />
            <path d="M26 36l18 21h10L38 35z" fill="#b0b0b0" stroke="none" />
          </Drawing>
        </span>
        <Drawing w={10} h={6}><path d="M0 0h10L5 6z" fill="#8f8f8f" stroke="none" /></Drawing>
      </button>
      <div className="mt-px flex h-[28px] shrink-0">
        <div className="flex w-[317px] items-center border border-[#bbb] bg-[#cbcbcb] pr-1">
          <select aria-label="Instance filter" disabled className="h-full flex-1 appearance-none bg-transparent pl-[3px] text-[14px] text-[#747474]">
            <option>New Lines (&lt;Thin Lines&gt;)</option>
          </select>
          <Chevron d={DOWN} className="stroke-1 text-[#999]" />
        </div>
        <button disabled className="flex flex-1 items-center gap-[5px] pb-1 pl-[6px] text-[14px] text-[#a3a3a3]">
          <Drawing w={17} h={17}>
            <path d="M1 2l2-1h4v6H1zM9 2l2-1h4v5M9 2v5M1 10l2-1h4v7H1z" stroke="#9e9e9e" strokeWidth="1.200" />
            <path d="M9 8h7v8H9zM11 11h3M11 13h3" stroke="#9e9e9e" strokeWidth="1.200" />
          </Drawing>
          Edit Type
        </button>
      </div>
      <div className="mt-px flex h-[24px] shrink-0 items-center justify-between bg-[#dadada] pr-1.5 pb-0.5 pl-0.5 text-[14px] text-black">
        Graphics
        <button aria-label="Collapse Graphics">
          <Drawing w={8} h={10} className="mb-1.5"><path d="M1 4l3-3 3 3M1 9l3-3 3 3" stroke="#000" strokeWidth="1.500" /></Drawing>
        </button>
      </div>
      <table className="w-full table-fixed border-collapse bg-[#efefef] text-[14px] leading-[20px]">
        <colgroup>
          <col className="w-[199px]" />
          <col />
          <col className="w-[15px]" />
        </colgroup>
        <tbody>
          <tr className="h-6">
            <th scope="row" className="border-r border-b border-dotted border-[#666] p-0 pb-0.5 pl-[10px] text-left font-normal text-[#222]">Line Style</th>
            <td className="border-r border-b border-dotted border-[#666] p-0 pb-0.5 pl-[3px] text-[#222]">&lt;Thin Lines&gt;</td>
            <td className="border-r border-b border-dotted border-[#666] p-0" />
          </tr>
          <tr className="h-6">
            <th scope="row" className="border-r border-b border-dotted border-[#666] p-0 pb-0.5 pl-[10px] text-left font-normal text-[#777]">Detail Line</th>
            <td className="border-r border-b border-dotted border-[#666] p-0 pl-[3px]"><Check id="detail-line" label="Detail Line" disabled /></td>
            <td className="border-r border-b border-dotted border-[#666] p-0" />
          </tr>
        </tbody>
      </table>
      <div className="mt-auto flex h-[31px] shrink-0 items-start justify-between pr-[2px] pl-0.5 text-[14px]">
        <a href="#help" className="text-[#0a66cc] underline">Properties help</a>
        <button disabled className="h-[26px] w-[86px] border border-[#bcbcbc] bg-[#cbcbcb] text-[#858585]">Apply</button>
      </div>
    </section>
  )
}

type TreeNode = { label: string; depth: number; open?: boolean; last?: boolean; strong?: boolean }

const tree: TreeNode[] = [
  { label: "Views (all)", depth: 0, open: true },
  { label: "Floor Plans", depth: 1, open: true },
  { label: "Level 1", depth: 2 },
  { label: "Level 2", depth: 2 },
  { label: "Site", depth: 2, strong: true },
  { label: "T.O. Fnd. Wall", depth: 2 },
  { label: "T.O. Footing", depth: 2 },
  { label: "T.O. Slab", depth: 2, last: true },
  { label: "Ceiling Plans", depth: 1, open: true },
  { label: "Level 1", depth: 2 },
  { label: "Level 2", depth: 2, last: true },
  { label: "3D Views", depth: 1, open: false },
  { label: "Elevations (Building Elevation)", depth: 1, open: true },
  { label: "East", depth: 2 },
  { label: "North", depth: 2 },
  { label: "South", depth: 2 },
  { label: "West", depth: 2, last: true },
]

const guidePaths = ["M10 17v5M16 11h9", "M10 0v22M36 0v22M43 11h12", "M10 0v22M62 0v22M62 11h19"]

function TreeRow({ node, inLastGroup }: { node: TreeNode; inLastGroup: boolean }) {
  const expander = (
    <button
      aria-label={`Toggle ${node.label}`}
      className={`col-start-1 row-start-1 size-[13px] self-center border border-[#8c8c8c] bg-[#f2f2f2] ${node.depth === 0 ? "ml-[4px]" : "ml-[30px]"}`}
    >
      <svg viewBox="0 0 11 11" className="size-[11px] fill-none stroke-[#3f5f9f]" aria-hidden="true">
        <path d={node.open ? "M2 5.500h7" : "M2 5.500h7M5.500 2v7"} />
      </svg>
    </button>
  )
  return (
    <li className="flex h-[22px] items-center">
      <span className="grid">
        <svg width={[26, 58, 84][node.depth]} height="22" className="col-start-1 row-start-1 fill-none stroke-[#8c8c8c]" strokeDasharray="1 1" shapeRendering="crispEdges" aria-hidden="true">
          <path d={node.last && !inLastGroup ? "M10 0v22M62 0v11M62 11h19" : guidePaths[node.depth]} />
          {node.depth === 2 && !inLastGroup && <path d="M36 0v22" />}
        </svg>
        {node.depth < 2 && expander}
      </span>
      {node.depth === 0 ? (
        <>
          <Drawing>
            <path d="M1 5V1h4M15 1h4v4M19 15v4h-4M5 19H1v-4" stroke="#666" />
            <path d="M5 7l2-2h8v8l-2 2H5z" fill="#eee" stroke="#666" />
          </Drawing>
          <span className="ml-[3px] bg-[#e2e2e2] px-[3px] leading-[22px]">{node.label}</span>
        </>
      ) : (
        <span className={node.strong ? "pb-0.5 font-bold" : "pb-0.5"}>{node.label}</span>
      )}
    </li>
  )
}

function ProjectBrowser() {
  return (
    <section className="flex min-h-0 flex-1 flex-col border-t-2 border-[#cbcbcb]">
      <PaletteTitle title="Project Browser - Project1" />
      <div className="mb-[2px] flex min-h-0 flex-1 overflow-hidden bg-white">
        <ul className="flex-1 text-[14px] whitespace-nowrap text-black">
          {tree.map((node, i) => (
            <TreeRow key={i} node={node} inLastGroup={i > 12} />
          ))}
        </ul>
        <div className="flex w-[19px] flex-col items-center bg-[#f0f0f0]">
          <button aria-label="Scroll up" className="flex h-[21px] items-center"><Chevron d={UP} /></button>
          <span className="h-[224px] w-full bg-[#cbcbcb]" />
          <button aria-label="Scroll down" className="mt-auto flex h-[21px] items-center"><Chevron d={DOWN} /></button>
        </div>
      </div>
    </section>
  )
}

/* ---------- drawing area ---------- */

const sheet = (c: string) => (
  <>
    <path d="M1 1h11v17H1z" fill="#f1f1f1" stroke={c} />
    <path d="M12 5h4l3 3v11h-9V5z" fill="#f1f1f1" stroke={c} />
    <path d="M5 10h10v5" stroke={c} strokeDasharray="3 1" strokeWidth="1.200" />
  </>
)

function DocTabs() {
  return (
    <div className="flex h-[27px] shrink-0 items-end justify-between bg-[#cbcbcb] text-[14px]">
      <div className="flex">
        <button className="flex h-[25px] w-[160px] items-center gap-[9px] pl-[6px]">
          <Drawing>{sheet("#8f8f8f")}</Drawing>Level 1
        </button>
        <div className="flex h-[25px] w-[160px] items-center justify-between bg-white pr-1.5 pl-[6px]">
          <button className="flex items-center gap-[9px] font-bold"><Drawing>{sheet(DARK)}</Drawing>Site</button>
          <button aria-label="Close Site"><CloseMark /></button>
        </div>
        <button className="flex h-[25px] items-center gap-[9px] pl-[6px]">
          <Drawing>{house("#8f8f8f")}</Drawing>{"{3D}"}
        </button>
      </div>
      <button aria-label="Tab list" className="mr-1 mb-1.5">
        <Drawing w={12} h={12}>
          <path d="M1 3h10" />
          <path d="M1 6h10l-5 5z" fill="#333" stroke="none" />
        </Drawing>
      </button>
    </div>
  )
}

const yellowContours = [
  "420,382 492,436 524,453 594,477 680,515 725,529 737,537 818,556 965,573 1003,572 1065,573 1092,572",
  "420,521 524,578 640,614 699,628 803,661 842,662 896,667 1010,667 1056,670 1112,670 1287,692 1317,707 1435,775 1440,779 1490,827 1513,849 1522,855 1628,972",
  "420,620 524,676 547,684 571,690 678,716 725,731 769,745 914,744 957,748 988,744 1109,745 1287,782 1325,806 1405,847 1440,875 1490,915 1519,936 1552,972",
  "420,718 544,785 668,815 716,820 759,833 837,832 872,831 920,817 963,813 993,809 1027,810 1062,803 1110,803 1265,831 1287,840 1356,880 1408,924 1440,947 1471,972",
  "420,913 493,957 522,972",
  "799,972 888,945 914,944 933,940 1023,920 1103,908 1112,908 1230,932 1277,949 1313,972",
  "1038,972 1077,965 1117,961 1129,961 1180,972",
  "1360,633 1372,640 1440,681 1490,716 1607,799 1636,850 1697,931 1702,972",
  "1496,533 1522,584 1617,701 1642,733 1680,777 1699,801 1740,905 1744,939 1756,944 1779,972",
]

const blueContours = [
  "491,243 513,258 593,303 615,301 666,314 735,336 816,397 846,415 898,430 945,443 996,444 1050,453 1092,453",
  "420,818 577,901 599,906 759,923 907,882 970,877 997,870 1080,856 1113,856 1193,872 1245,881 1307,911 1322,923 1388,972",
  "1496,571 1521,621 1657,780 1698,835 1711,870 1725,963 1748,972",
]

const roadLines = [
  "1006,243 725,728 725,855 843,972",
  "1035,243 1030,247 748,735 748,845 876,972",
]

function SitePlan() {
  return (
    <svg className="absolute inset-0 size-full" role="img" aria-label="Site floor plan">
      <g transform="translate(-418 -241)" fill="none">
        <g shapeRendering="crispEdges">
          {yellowContours.map((p) => <polyline key={p} points={p} stroke="#ffff00" />)}
          {blueContours.map((p) => <polyline key={p} points={p} stroke="#0000e6" />)}
          {roadLines.map((p) => <polyline key={p} points={p} stroke="#000" />)}
        </g>
        <path d="M764 708Q750 734 749 767" stroke="#777" strokeWidth="1.500" />
        <path d="M758 722l109 45M771 723l-13-1 10 7" stroke="#8aa8ff" strokeWidth="1.300" />
        <text x="794" y="727" transform="rotate(22 794 727)" fill="#1747b0" stroke="none" className="font-['Liberation_Sans',Arial,sans-serif] text-[14px]">50000.0</text>
      </g>
    </svg>
  )
}

function NavigationBar() {
  return (
    <div className="absolute top-[2px] right-[1px] flex h-[118px] w-[36px] flex-col items-center rounded-md border-2 border-[#bdbdbd] bg-[#f5f5f5]">
      <button aria-label="Close navigation bar" className="mt-px mr-px self-end">
        <Drawing w={10} h={8}>
          <rect width="10" height="8" rx="4" fill="#bcbcbc" stroke="none" />
          <path d="M3 2l4 4M7 2L3 6" stroke="#fff" strokeWidth="1.200" />
        </Drawing>
      </button>
      <button aria-label="2D Steering Wheel" className="mt-2 flex flex-col items-center">
        <span className="grid">
          <Drawing w={28} h={28} className="col-start-1 row-start-1">
            <path d="M12 2h10v9c0 8-5 10-10 10S2 17 2 11 6 2 12 2z" fill="#f0f0f0" stroke="#9a9a9a" />
            <circle cx="12" cy="12" r="5" stroke="#9a9a9a" />
          </Drawing>
          <span className="col-start-1 row-start-1 self-end justify-self-end text-[11px] leading-[12px] font-bold text-[#6f95c0]">2D</span>
        </span>
        <Caret className="mt-1 text-[#999]" />
      </button>
      <span className="my-1 h-px w-[26px] bg-[#c4c4c4]" />
      <button aria-label="Zoom region" className="flex flex-col items-center">
        <Drawing w={20} h={20}>
          <path d="M2 2h13v12H2z" fill="#b4d3a4" stroke="#7fb56c" />
          <circle cx="13" cy="12" r="4" fill="#fff" stroke="#999" />
          <path d="M16 15l3 4" stroke="#999" />
        </Drawing>
        <Caret className="mt-1.5 text-[#999]" />
      </button>
      <button aria-label="Navigation bar options" className="mt-auto mr-px mb-[3px] self-end">
        <Drawing w={10} h={8}>
          <rect width="10" height="8" rx="4" fill="#bcbcbc" stroke="none" />
          <path d="M3 3h4M4 5h2" stroke="#fff" strokeWidth="1.200" />
        </Drawing>
      </button>
    </div>
  )
}

const viewTools: { name: string; art: ReactNode }[] = [
  { name: "Detail Level", art: <rect x="1" y="2" width="18" height="14" fill="#e8eaee" strokeWidth="2" /> },
  { name: "Visual Style", art: <path d="M1 8l4-5h14v8l-4 6H1zM1 8h14v9M15 8l4-5" fill="#eee" /> },
  { name: "Sun Path", art: <><circle cx="9" cy="9" r="5" fill="#ffd76a" stroke="#d89a1c" strokeWidth="2" /><path d="M9 0v2M9 16v2M0 9h2M3 3l1 1M3 15l1-1M15 3l-1 1" stroke="#d89a1c" strokeWidth="2" /><g transform="translate(12 12)">{redCross}</g></> },
  { name: "Shadows", art: <><ellipse cx="8" cy="17" rx="7" ry="2" fill="#777" stroke="none" /><circle cx="9" cy="8" r="6.500" fill="#cfe6f7" stroke="#4b8cc0" /><g transform="translate(12 12)">{redCross}</g></> },
  { name: "Crop View", art: <><path d="M0 14h4V5h13v9M7 18V8h6M0 17h3" stroke="#2f6fae" strokeWidth="2.400" /><path d="M13 2v3" /><g transform="translate(12 11)">{redCross}</g></> },
  { name: "Show Crop Region", art: <><path d="M0 14h4V5h10M7 18V8h5" stroke="#2f6fae" strokeWidth="2.400" /><circle cx="15" cy="8" r="4" fill="#dcefff" stroke="#3b82c4" /><path d="M13 13h4v4h-4z" fill="#8aa" stroke="none" /></> },
  { name: "Temporary Hide/Isolate", art: <><path d="M1 6c3-1 4 2 5 6M10 13l4-9c2-2 5 1 5 6" /><circle cx="8" cy="13" r="3" fill="#e5eef5" /><circle cx="15" cy="11" r="3" fill="#e5eef5" /></> },
  { name: "Reveal Hidden Elements", art: <><circle cx="10" cy="7" r="4" fill="#cfe8fb" stroke="#3b82c4" strokeWidth="2" /><path d="M8.500 12h3v4h-3z" fill="#567" stroke="none" /></> },
  { name: "Temporary View Properties", art: <><path d="M1 4h17M3 4v12h7M1 8h2M1 12h2" stroke="#999" strokeDasharray="3 1" /><circle cx="14" cy="12" r="4.500" stroke="#999" /></> },
  { name: "Analytical Model", art: <path d="M6 7V3h12M2 8h12v9M2 8v9M6 8v9M10 8v9M2 12h12" stroke="#999" strokeWidth="1.300" /> },
  { name: "Reveal Constraints", art: <><path d="M1 1v8M19 1v8M1 4h18M4 2L1 4l3 2M16 2l3 2-3 2" /><path d="M1 12v5h9" strokeDasharray="2 1" /><rect x="11" y="11" width="8" height="6" fill="#666" /><path d="M13 11c0-4 4-4 4 0" /></> },
]

function ViewControlBar() {
  return (
    <div className="flex h-[22px] shrink-0 items-center border-b border-[#c4c4c4] bg-[#f0f0f0] pl-[29px]">
      <button className="w-[62px] text-left text-[13px] text-black">1 : 100</button>
      {viewTools.map((tool) => (
        <Tool key={tool.name} name={tool.name} className="w-[25px]">{tool.art}</Tool>
      ))}
      <button aria-label="Scroll left" className="ml-[4px]"><Chevron d={LEFT} /></button>
      {/* horizontal scroll track */}
      <div className="flex h-full flex-1 justify-center pl-0.5">
        <span className="h-full w-[21px] bg-[#cbcbcb]" />
      </div>
      <button aria-label="Scroll right" className="mr-2.5"><Chevron d={RIGHT} /></button>
      <Drawing w={14} h={14} className="mr-1 self-end">
        <path d="M10 0h3v3h-3zM5 5h3v3H5zM10 5h3v3h-3zM0 10h3v3H0zM5 10h3v3H5zM10 10h3v3h-3z" fill="#bdbdbd" stroke="none" />
      </Drawing>
    </div>
  )
}

function FilletTooltip() {
  return (
    <div role="tooltip" className="absolute top-[144px] left-[1089px] z-20 h-[490px] w-[408px] rounded-[3px] bg-linear-to-b from-[#efefef] to-[#ebebeb] px-[10px] pt-[11px] text-[14px] leading-[20px] text-[#4a4a4a] shadow-[1px_2px_6px_rgba(0,0,0,0.4)]">
      <p className="font-bold">Fillet Arc</p>
      <p className="mt-2">Rounds a corner created by 2 intersecting lines.</p>
      <p className="mt-[22px]">Select the lines to fillet. Then move the cursor and click to define the fillet arc.</p>
      <p className="mt-3">The elements are automatically trimmed to the fillet.</p>
      <svg width="380" height="284" viewBox="0 0 380 284" fill="none" className="mt-[18px] -ml-[3px] bg-[#e9e9e9]" aria-hidden="true">
        <path d="M0 26h130v41h165M295 232h40v52" stroke="#0f0f0f" strokeWidth="5" strokeLinejoin="miter" />
        <path d="M295 68v166" stroke="#a9b8e6" strokeWidth="7" strokeLinecap="round" />
        <path d="M295 67v167" stroke="#14225e" strokeWidth="5" strokeLinecap="round" />
        <path d="M270 139h10M288 139h11M284 125v11M284 143v11M283 139h2" stroke="#222" />
        <path d="M291 155c0-7 3-10 9-10M304 145h4M291 158v4" stroke="#333" strokeWidth="1.500" />
        <path d="M290 153h3v3h-3zM299 144h3v3h-3z" fill="#fff" stroke="#111" />
      </svg>
    </div>
  )
}

/* ---------- status bar ---------- */

const statusTools: { name: string; art: ReactNode }[] = [
  { name: "Select Links", art: <><circle cx="4" cy="5" r="3" stroke="#d9a514" strokeWidth="2.500" /><circle cx="15" cy="5" r="3" stroke="#d9a514" strokeWidth="2.500" /><path d="M5 6h9" stroke="#f0c232" strokeWidth="3" /><g transform="translate(9 6)">{cursor}</g></> },
  { name: "Select Underlay Elements", art: <><path d="M1 12L8 3h6v9zM1 16h12" fill="#d8ecfa" stroke={BLUE} /><g transform="translate(12 1)">{redCross}</g><g transform="translate(11 6)">{cursor}</g></> },
  { name: "Select Pinned Elements", art: <><path d="M1 1h12v3h-2v6h3v3H1v-3h2V4H1zM7 13v6" fill="#f09a4a" stroke="#b45f14" /><g transform="translate(11 6)">{cursor}</g></> },
  { name: "Select Elements by Face", art: <><path d="M1 4l8-3h4v14l-9 4H1z" fill="#a8d4f2" stroke={BLUE} /><g transform="translate(13 1)">{redCross}</g><g transform="translate(11 6)">{cursor}</g></> },
  { name: "Drag Elements on Selection", art: <><path d="M6 0v12M0 6h12M4 2l2-2 2 2M4 10l2 2 2-2M2 4L0 6l2 2M10 4l2 2-2 2" stroke="#222" strokeWidth="1.200" /><g transform="translate(10 6)">{cursor}</g></> },
  { name: "Background Processes", art: <circle cx="10" cy="10" r="6" stroke="#a0a0a0" strokeWidth="4" strokeDasharray="3 1" /> },
]

function StatusBar() {
  return (
    <footer className="flex h-[34px] shrink-0 items-center border-b border-[#e8e8e8] bg-[#cbcbcb] text-[14px] text-black">
      <span className="w-[687px] pl-px">Drag arc radius to desired location</span>
      <Tool name="Worksets" className="mr-2">
        <path d="M2 9l4-2 4 2v8l-4 2-4-2z" fill="#3f9fe0" stroke="#15609f" />
        <path d="M6 3l4-2 4 2v5l-4-2-4 1z" fill="#8bcf6a" stroke="#2f7d1f" />
        <path d="M13 7v3l2 2v7M19 7v3l-2 2v7" />
      </Tool>
      <div className="flex h-[22px] w-[254px] items-center bg-white pr-1">
        <select aria-label="Active workset" className="h-full flex-1 appearance-none bg-transparent"><option></option></select>
        <Chevron d={DOWN} className="stroke-1 text-[#999]" />
      </div>
      <Tool name="Editing Requests" className="mr-1.5 ml-2">
        <path d="M8 1h10v6h-6zM12 8l-7 4v3M3 14h7v5H1z" fill="#aaa" stroke="#929292" />
      </Tool>
      :0
      <Tool name="Design Options" className="mr-2.5 ml-[23px]">
        <rect x="1" y="1" width="18" height="18" fill="#f1f1f1" />
        <path d="M1 3h18" strokeWidth="3" />
        <path d="M4 8h3M9 8h7M7 12h3M12 12h5M7 16h3M12 16h5" />
      </Tool>
      <Tool name="Add to Set" className="mr-[9px]">
        <path d="M3 1h15v17H7" fill="#989898" stroke="#8a8a8a" />
        <path d="M1 12h6V9l4 5-4 5v-3H1z" fill="#c4c4c4" stroke="#f0f0f0" strokeWidth="1" />
      </Tool>
      <div className="flex h-[22px] w-[254px] items-center bg-white pr-1">
        <select aria-label="Design option" className="h-full flex-1 appearance-none bg-transparent pl-[2px] text-[14px] text-[#8a8a8a]"><option>Main Model</option></select>
        <Chevron d={DOWN} className="stroke-1 text-[#999]" />
      </div>
      <div className="ml-auto flex items-center pr-[78px]">
        {statusTools.map((tool) => (
          <Tool key={tool.name} name={tool.name} className="w-[30px]">{tool.art}</Tool>
        ))}
        <button className="ml-[3px] flex items-center">
          <Drawing><path d="M1 2h18l-7 8v9H8v-9z" fill="#dfe4ea" /><path d="M2 3h16l-3 3H5z" fill="#8b97a4" stroke="none" /></Drawing>
          :0
        </button>
      </div>
    </footer>
  )
}

export default function App() {
  const [tooltipOpen] = useState(true)

  return (
    <div className="relative flex h-screen flex-col overflow-hidden bg-[#cbcbcb] font-['Noto_Sans','Open_Sans',sans-serif] text-[#333]">
      <TitleBar />
      <RibbonTabs />
      <Ribbon />
      <OptionsBar />
      <div className="flex min-h-0 flex-1">
        <aside className="flex w-[418px] shrink-0 flex-col border-r-2 border-[#cbcbcb] bg-[#ededed] pr-[3px]">
          <PropertiesPalette />
          <ProjectBrowser />
        </aside>
        <main className="flex min-w-0 flex-1 flex-col border-b-2 border-white">
          <DocTabs />
          <div className="flex min-h-0 flex-1 bg-white">
            <div className="relative flex-1 overflow-hidden">
              <SitePlan />
              <NavigationBar />
            </div>
            <div className="mr-[2px] flex w-[19px] flex-col items-center bg-[#f0f0f0]">
              <button aria-label="Scroll up" className="flex h-6 items-center"><Chevron d={UP} /></button>
              <div className="flex w-full flex-1 items-center">
                <span className="h-[21px] w-full bg-[#cbcbcb]" />
              </div>
              <button aria-label="Scroll down" className="flex h-6 items-center"><Chevron d={DOWN} /></button>
            </div>
          </div>
          <ViewControlBar />
        </main>
      </div>
      <StatusBar />
      {tooltipOpen && <FilletTooltip />}
    </div>
  )
}
